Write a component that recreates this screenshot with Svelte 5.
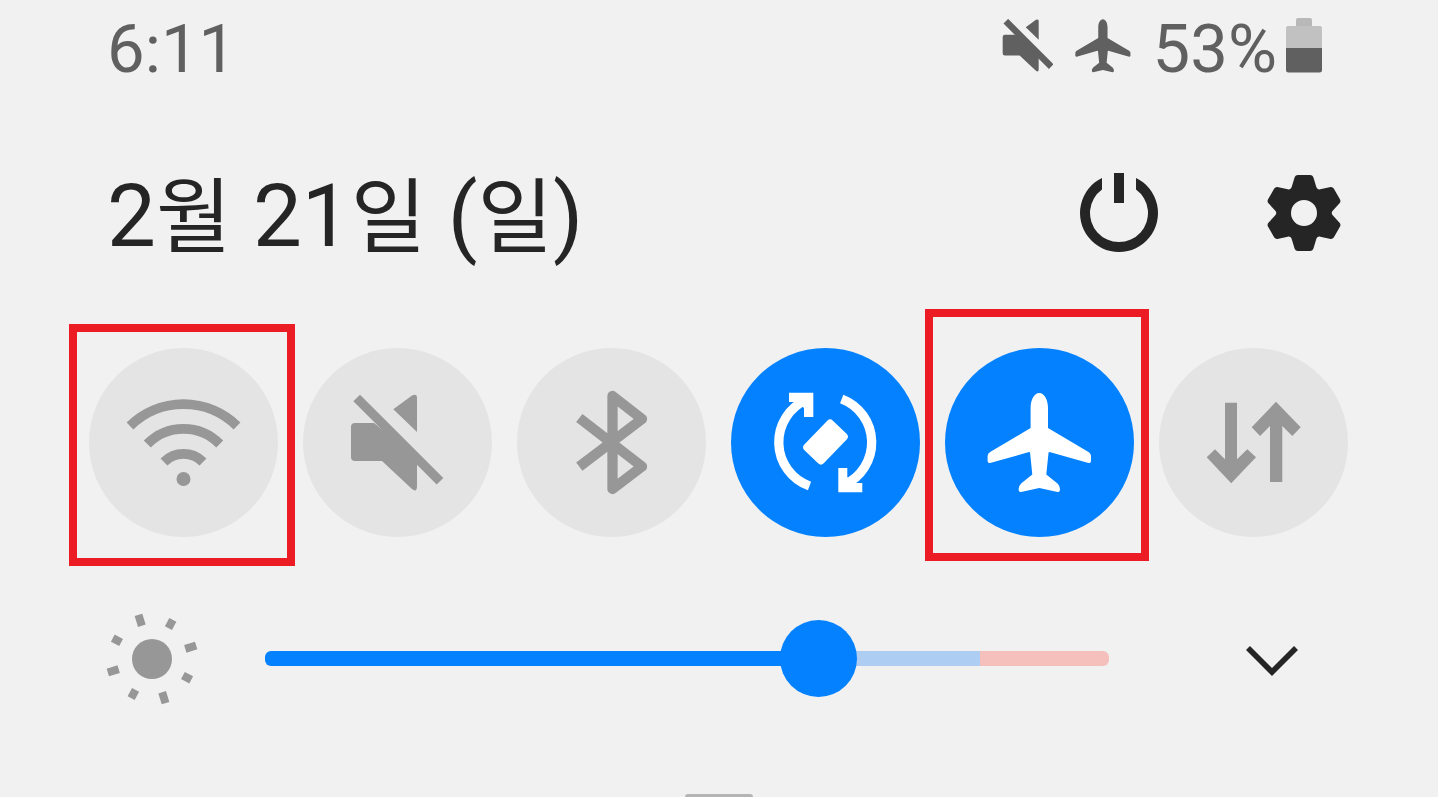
<script lang="ts">
  type Tile = { id: string; label: string; on: boolean; mark?: string }

  let tiles = $state<Tile[]>([
    { id: 'wifi', label: 'Wi-Fi', on: false, mark: 'mark-wifi' },
    { id: 'mute', label: '무음', on: false },
    { id: 'bluetooth', label: '블루투스', on: false },
    { id: 'rotate', label: '자동 회전', on: true },
    { id: 'plane', label: '비행기 탑승 모드', on: true, mark: 'mark-plane' },
    { id: 'data', label: '모바일 데이터', on: false },
  ])

  const brightnessMax = 1000
  let brightness = $state(671)
  let level = $derived((brightness / brightnessMax) * 100)

  const rays = [0, 1, 2, 3, 4, 5, 6, 7].map((i) => ({ angle: i * 45 - 17, long: i % 2 === 0 }))

  function polar(x: number, y: number, deg: number): string {
    const a = (deg * Math.PI) / 180
    const px = 40 + x * Math.cos(a) - y * Math.sin(a)
    const py = 40 + x * Math.sin(a) + y * Math.cos(a)
    return `${px.toFixed(2)} ${py.toFixed(2)}`
  }

  // six teeth, joined by shallow valleys
  function gearPath(): string {
    let d = ''
    for (let a = 0; a < 360; a += 60) {
      d += `${a === 0 ? 'M' : 'L'}${polar(-12, -27, a)} L${polar(-9.6, -35, a)} `
      d += `Q${polar(-8.8, -38, a)} ${polar(-6, -38, a)} L${polar(6, -38, a)} `
      d += `Q${polar(8.8, -38, a)} ${polar(9.6, -35, a)} L${polar(12, -27, a)} `
      d += `Q${polar(0, -26, a + 30)} ${polar(-12, -27, a + 60)} `
    }
    return d + 'Z M53 40 A13 13 0 1 0 27 40 A13 13 0 1 0 53 40 Z'
  }
</script>

{#snippet muteShape(width: number)}
  <path
    d="M71 75 H52 Q48 75 48 79 V109 Q48 113 52 113 H79 L109 141 Q114 145 114 138 V110 Z"
    fill="currentColor"
  />
  <path d="M90.3 61.3 L109 47.6 Q114 45 114 50 V84 Z" fill="currentColor" />
  <path d="M53.7 50 L137 133.3" stroke="currentColor" stroke-width={width} />
{/snippet}

{#snippet planeShape()}
  <path
    d="M94.3 45 C99.5 45 103 52 103 60 V80 L143.5 104 Q146 105.5 146 108 V113 Q146 115.5 143.5 115 L104.5 104 Q103.6 104 103.5 105 L101.3 126.5 L112.5 135.5 Q115 138 115 141 Q115 144.5 112.5 144 L94.3 140 L76.1 144 Q73.6 144.5 73.6 141 Q73.6 138 76.1 135.5 L87.3 126.5 L85.1 105 Q85 104 84.1 104 L45.1 115 Q42.6 115.5 42.6 113 V108 Q42.6 105.5 45.1 104 L85.6 80 V60 C85.6 52 89.1 45 94.3 45 Z"
    fill="currentColor"
  />
{/snippet}

<main class="panel">
  <div class="status">
    <time>6:11</time>
    <div class="indicators">
      <svg width="51" height="54" viewBox="47 46 93 99" fill="none" aria-hidden="true">
        {@render muteShape(12)}
      </svg>
      <svg width="56" height="54" viewBox="42 45 105 100" aria-hidden="true">
        {@render planeShape()}
      </svg>
      <div class="battery">
        <span>53%</span>
        <svg width="36" height="56" viewBox="0 0 36 56" aria-hidden="true">
          <rect x="10" y="0" width="16" height="10" rx="2" fill="#b8b8b8" />
          <path d="M0 30 V10 Q0 8 2 8 H34 Q36 8 36 10 V30 Z" fill="#c1c1c1" />
          <path d="M0 30 H36 V52 Q36 54.5 33.5 54.5 H2.5 Q0 54.5 0 52 Z" fill="#606060" />
        </svg>
      </div>
    </div>
  </div>

  <header class="header">
    <h1>2<span>월</span> 21<span>일</span> (<span>일</span>)</h1>
    <div class="actions">
      <button type="button" aria-label="전원">
        <svg width="80" height="80" viewBox="0 0 80 80" fill="currentColor">
          <path d="M57 4.9 A39 39 0 1 1 23 4.9 V16.5 A29 29 0 1 0 57 16.5 Z" />
          <rect x="35" y="0" width="10" height="30" />
        </svg>
      </button>
      <button type="button" aria-label="설정">
        <svg width="80" height="80" viewBox="0 0 80 80" fill="currentColor">
          <path d={gearPath()} fill-rule="evenodd" />
        </svg>
      </button>
    </div>
  </header>

  <div class="tiles">
    {#each tiles as tile (tile.id)}
      <div class="cell">
        <button
          type="button"
          class="tile"
          class:on={tile.on}
          aria-label={tile.label}
          aria-pressed={tile.on}
          onclick={() => (tile.on = !tile.on)}
        >
          <svg viewBox="0 0 189 189" fill="none" stroke="none">
            {#if tile.id === 'wifi'}
              <g stroke="currentColor" stroke-width="9.8">
                <path d="M41 78 A76.5 76.5 0 0 1 148 78" />
                <path d="M58.3 96 A50.7 50.7 0 0 1 130.7 96" />
                <path d="M75 114 A27.7 27.7 0 0 1 114 114" />
              </g>
              <circle cx="94.5" cy="131" r="7" fill="currentColor" />
            {:else if tile.id === 'mute'}
              {@render muteShape(9.4)}
            {:else if tile.id === 'bluetooth'}
              <path
                d="M62.3 70 L125 118.5 L95.5 141 V48 L125 71 L62.3 118.7"
                stroke="currentColor"
                stroke-width="10.3"
                stroke-linejoin="round"
              />
            {:else if tile.id === 'rotate'}
              <g stroke="currentColor" stroke-width="9.3">
                <path d="M78.5 138 A46.5 46.5 0 0 1 76 51.5" />
                <path d="M110.7 51 A46.5 46.5 0 0 1 113 137" />
              </g>
              <path d="M58 44.7 H82.3 V69 H73 V60 L66 54 H58 Z" fill="currentColor" />
              <path d="M107.3 120 H116.3 V129 L123 135 H131.3 V144.3 H107.3 Z" fill="currentColor" />
              <rect
                x="74"
                y="80.5"
                width="41"
                height="27"
                rx="4"
                transform="rotate(-46 94.5 94)"
                fill="currentColor"
              />
            {:else if tile.id === 'plane'}
              {@render planeShape()}
            {:else}
              <g fill="currentColor">
                <path d="M66 54.7 H78 V111.3 L88.3 101.3 L97 109.3 L72.2 135.3 L47.7 109.3 L56 101.3 L66 111.3 Z" />
                <path d="M111 134 H123.3 V78 L133.3 88 L141.7 79.3 L117 53.7 L92.7 79.3 L101 88 L111 78 Z" />
              </g>
            {/if}
          </svg>
        </button>
        {#if tile.mark}
          <span class="mark {tile.mark}"></span>
        {/if}
      </div>
    {/each}
  </div>

  <div class="brightness">
    <svg width="92" height="92" viewBox="0 0 92 92" fill="#979797" aria-hidden="true">
      <circle cx="46" cy="46" r="20" />
      {#each rays as ray}
        <rect
          x="42"
          y={ray.long ? -0.2 : 1.6}
          width="8"
          height={ray.long ? 11.4 : 9.4}
          transform="rotate({ray.angle} 46 46)"
        />
      {/each}
    </svg>
    <input
      type="range"
      min="0"
      max={brightnessMax}
      bind:value={brightness}
      aria-label="밝기"
      style="--level: {level}%"
    />
    <button type="button" aria-label="펼치기">
      <svg width="52" height="40" viewBox="0 0 52 40" fill="none">
        <path d="M2 9 L26 33 L50 9" stroke="currentColor" stroke-width="5.6" />
      </svg>
    </button>
  </div>

  <div class="handle"></div>
</main>

<style>
  :global(body) {
    margin: 0;
    background: #f1f1f1;
  }

  .panel {
    color: #252525;
    font-family: Roboto, 'Noto Sans CJK KR', sans-serif;
  }

  button {
    display: block;
    padding: 0;
    border: 0;
    background: none;
    color: inherit;
    cursor: pointer;
  }

  svg {
    display: block;
  }

  .status {
    display: flex;
    align-items: center;
    justify-content: space-between;
    height: 98px;
    padding: 0 116px 0 107px;
    color: #606060;
    font-size: 67px;
    line-height: 98px;
  }

  .indicators {
    display: flex;
    align-items: center;
    gap: 22px;
  }

  .indicators svg {
    margin-bottom: 6px;
  }

  .battery {
    display: flex;
    align-items: center;
    gap: 9px;
  }

  .header {
    display: flex;
    align-items: center;
    justify-content: space-between;
    height: 120px;
    margin-top: 55px;
    padding: 0 94px 0 107px;
  }

  h1 {
    margin: 0;
    padding-top: 8px;
    font-size: 87px;
    font-weight: 400;
    line-height: 120px;
    white-space: nowrap;
  }

  h1 span {
    font-size: 82px;
  }

  .actions {
    display: flex;
    gap: 105px;
  }

  .tiles {
    display: grid;
    grid-template-columns: repeat(6, 1fr);
    gap: 25px;
    margin-top: 75px;
    padding: 0 90px 0 89px;
  }

  .cell {
    position: relative;
  }

  .tile {
    width: 100%;
    border-radius: 50%;
    background: #e4e4e4;
    color: #979797;
  }

  .tile.on {
    background: #0381fe;
    color: #fff;
  }

  .mark {
    position: absolute;
    border: 8px solid #ec1c24;
    pointer-events: none;
  }

  .mark-wifi {
    inset: -24px -17px -29px -20px;
  }

  .mark-plane {
    inset: -39px -15px -24px -20px;
  }

  .brightness {
    display: flex;
    align-items: center;
    height: 77px;
    margin-top: 83px;
    padding: 0 140px 0 106px;
  }

  .brightness input {
    flex: 1;
    min-width: 0;
    height: 77px;
    margin: 0 137px 0 67px;
    appearance: none;
    background: none;
  }

  .brightness input::-webkit-slider-runnable-track {
    height: 15px;
    border-radius: 6px;
    background: linear-gradient(
      to right,
      #0381fe var(--level),
      #adcef2 var(--level),
      #adcef2 84.7%,
      #f5c0bc 84.7%
    );
  }

  .brightness input::-webkit-slider-thumb {
    width: 77px;
    height: 77px;
    margin-top: -31px;
    border-radius: 50%;
    background: #0381fe;
    appearance: none;
  }

  .handle {
    width: 68px;
    height: 3px;
    margin: 97px auto 0;
    border-radius: 3px 3px 0 0;
    background: #b4b4b4;
  }
</style>
